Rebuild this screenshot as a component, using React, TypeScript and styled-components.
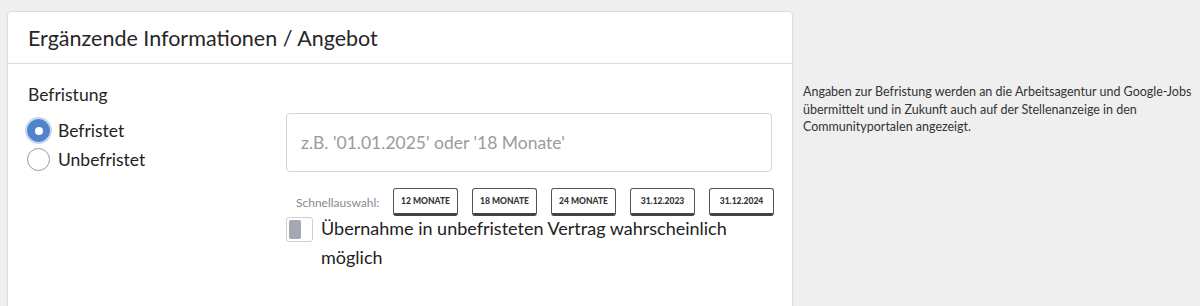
import React from "react";
import styled, { createGlobalStyle } from "styled-components";

const Global = createGlobalStyle`
  html, body { margin: 0; padding: 0; background: #efefef; }
  body { font-family: Lato, "Open Sans", sans-serif; color: #222; }
  * { box-sizing: border-box; }
`;

const Page = styled.div`
  display: flex;
  align-items: flex-start;
  padding: 11px 0 0 7px;
  height: 306px;
  overflow: hidden;
`;

const Card = styled.section`
  width: 786px;
  height: 320px;
  background: #fff;
  border: 1px solid #dcdcdc;
  border-radius: 4px;
  flex-shrink: 0;
`;

const CardHeader = styled.header`
  height: 52px;
  display: flex;
  align-items: center;
  padding: 0 20px;
  border-bottom: 1px solid #dcdcdc;
`;

const Title = styled.h2`
  margin: 0;
  font-weight: 400;
  font-size: 21.5px;
  color: #262626;
`;

const CardBody = styled.div`
  padding: 19px 20px 0 20px;
`;

const FieldLabel = styled.div`
  font-size: 17.5px;
  line-height: 24px;
  color: #262626;
`;

const FieldRow = styled.div`
  display: grid;
  grid-template-columns: 258px 1fr;
  margin-top: 6px;
`;

const RadioGroup = styled.div`
  display: flex;
  flex-direction: column;
  padding-top: 3px;
`;

const RadioRow = styled.label`
  display: flex;
  align-items: center;
  gap: 8px;
  height: 29px;
  font-size: 17.5px;
  color: #222;
`;

const RadioCircle = styled.span<{ $checked?: boolean }>`
  width: 23px;
  height: 23px;
  border-radius: 50%;
  margin-left: -1px;
  flex-shrink: 0;
  display: flex;
  align-items: center;
  justify-content: center;
  background: ${(p) => (p.$checked ? "#4f84cc" : "#fff")};
  border: 1px solid ${(p) => (p.$checked ? "#4f84cc" : "#9a9a9a")};
  box-shadow: ${(p) => (p.$checked ? "0 0 0 2px #c9d8ef" : "none")};
  &::after {
    content: "";
    display: ${(p) => (p.$checked ? "block" : "none")};
    width: 8px;
    height: 8px;
    border-radius: 50%;
    background: #fff;
  }
`;

const RightCol = styled.div`
  display: flex;
  flex-direction: column;
`;

const TextInput = styled.input`
  width: 486px;
  height: 59px;
  border: 1px solid #d4d4d4;
  border-radius: 4px;
  padding: 0 14px;
  font-family: inherit;
  font-size: 17.5px;
  color: #222;
  outline: none;
  &::placeholder { color: #9b9b9b; }
`;

const QuickRow = styled.div`
  display: flex;
  align-items: center;
  margin-top: 16px;
  padding-left: 10px;
`;

const QuickLabel = styled.span`
  font-size: 12px;
  color: #8a8a8a;
  width: 97px;
  flex-shrink: 0;
`;

const QuickButtons = styled.div`
  display: flex;
  gap: 14px;
`;

const QuickButton = styled.button`
  width: 65px;
  height: 28px;
  padding: 0;
  background: #fff;
  border: 1px solid #555;
  border-bottom: 3px solid #444;
  border-radius: 3px;
  font-family: inherit;
  font-size: 8.5px;
  font-weight: 900;
  color: #333;
  text-transform: uppercase;
  cursor: pointer;
`;

const ToggleRow = styled.label`
  display: flex;
  align-items: flex-start;
  gap: 8px;
  margin-top: 1px;
`;

const ToggleBox = styled.span`
  width: 27px;
  height: 25px;
  border: 1px solid #cfcfcf;
  border-radius: 3px;
  padding: 2px;
  flex-shrink: 0;
  display: flex;
  &::before {
    content: "";
    width: 12px;
    height: 100%;
    background: #a3a9b1;
    border-radius: 2px;
  }
`;

const ToggleText = styled.span`
  font-size: 18px;
  line-height: 29px;
  color: #222;
  margin-top: -3px;
  max-width: 450px;
`;

const Help = styled.p`
  margin: 72px 0 0 10px;
  width: 392px;
  font-size: 12.5px;
  line-height: 17.5px;
  color: #333;
`;

const quick = ["12 Monate", "18 Monate", "24 Monate", "31.12.2023", "31.12.2024"];

export default function App() {
  return (
    <>
      <Global />
      <Page>
        <Card>
          <CardHeader>
            <Title>Ergänzende Informationen / Angebot</Title>
          </CardHeader>
          <CardBody>
            <FieldLabel>Befristung</FieldLabel>
            <FieldRow>
              <RadioGroup>
                <RadioRow>
                  <RadioCircle $checked />
                  Befristet
                </RadioRow>
                <RadioRow>
                  <RadioCircle />
                  Unbefristet
                </RadioRow>
              </RadioGroup>
              <RightCol>
                <TextInput placeholder="z.B. '01.01.2025' oder '18 Monate'" />
                <QuickRow>
                  <QuickLabel>Schnellauswahl:</QuickLabel>
                  <QuickButtons>
                    {quick.map((q) => (
                      <QuickButton key={q}>{q}</QuickButton>
                    ))}
                  </QuickButtons>
                </QuickRow>
                <ToggleRow>
                  <ToggleBox />
                  <ToggleText>Übernahme in unbefristeten Vertrag wahrscheinlich möglich</ToggleText>
                </ToggleRow>
              </RightCol>
            </FieldRow>
          </CardBody>
        </Card>
        <Help>
          Angaben zur Befristung werden an die Arbeitsagentur und Google-Jobs übermittelt und in Zukunft auch auf der Stellenanzeige in den Communityportalen angezeigt.
        </Help>
      </Page>
    </>
  );
}
